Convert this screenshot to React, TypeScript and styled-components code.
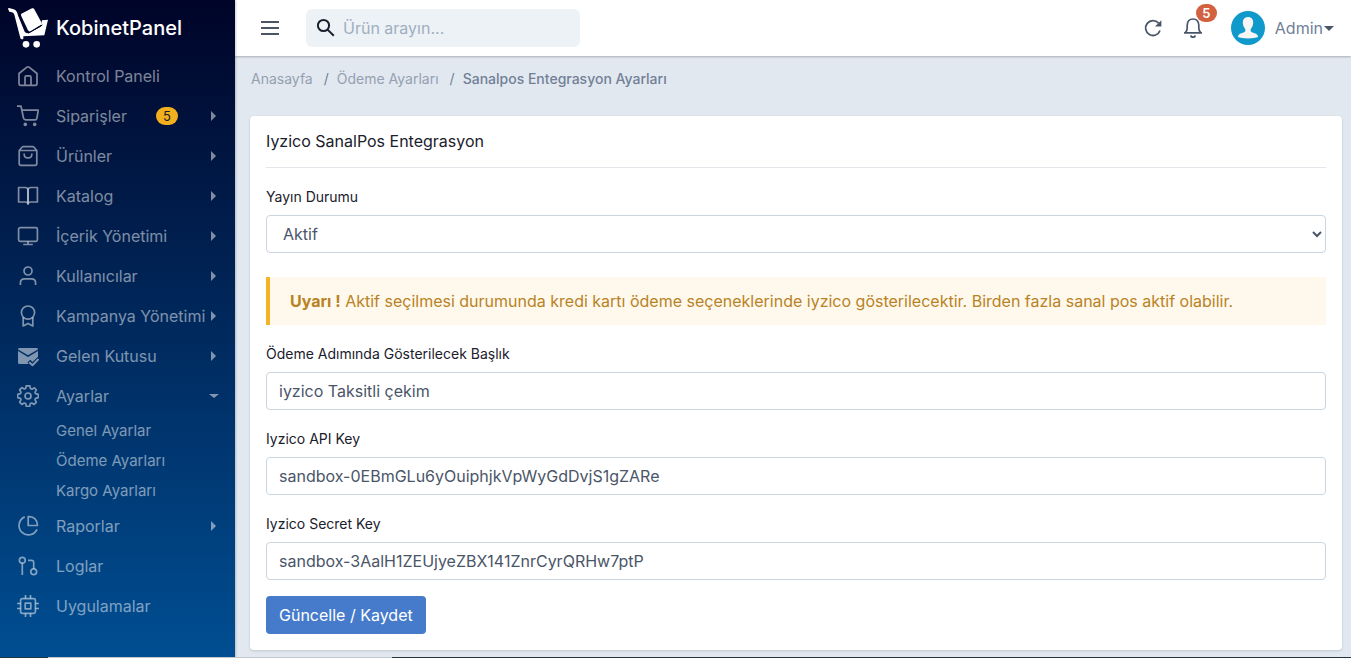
import React, { ReactNode } from "react";
import styled, { createGlobalStyle } from "styled-components";

const GlobalStyle = createGlobalStyle`
  *, *::before, *::after { box-sizing: border-box; }
  body {
    margin: 0;
    background: #e2e8f0;
    color: #1a202c;
    font-family: Inter, "Liberation Sans", sans-serif;
    font-size: 16px;
    line-height: 24px;
  }
  button, input, select { font: inherit; }
  a { color: inherit; text-decoration: none; }
`;

const Page = styled.div`
  display: flex;
  min-height: 100vh;
`;

const Sidebar = styled.aside`
  flex: 0 0 235px;
  background: linear-gradient(#000428, #004e92);
  box-shadow: 1px 0 2px rgba(0, 0, 0, 0.2);
  color: #fff;
  z-index: 1;
`;

const Brand = styled.a`
  display: flex;
  align-items: center;
  gap: 8px;
  height: 56px;
  padding: 0 8px;
  font-size: 20px;
  font-weight: 500;
`;

const NavList = styled.ul`
  list-style: none;
  margin: 0;
  padding: 0;
`;

const NavLink = styled.a`
  display: flex;
  align-items: center;
  height: 40px;
  padding: 0 16px 0 17px;
  color: rgba(255, 255, 255, 0.5);
`;

const NavIcon = styled.svg`
  flex: none;
  width: 22px;
  height: 22px;
  margin-right: 17px;
  fill: none;
  stroke: currentColor;
  stroke-width: 1.7;
  stroke-linejoin: round;
`;

const NavText = styled.span`
  flex: 1;
  white-space: nowrap;
`;

const CountBadge = styled.span`
  width: 22px;
  margin-right: 33px;
  border-radius: 9px;
  background: #f2b01e;
  color: #1a202c;
  font-size: 13px;
  line-height: 18px;
  text-align: center;
`;

const SideCaret = styled.span<{ $open?: boolean }>`
  border: solid transparent;
  ${(p) =>
    p.$open
      ? "border-width: 4px 5px 0; border-top-color: currentColor;"
      : "border-width: 5px 0 5px 5px; border-left-color: currentColor; margin-right: 3px;"}
`;

const SubLink = styled.a`
  display: block;
  padding-left: 56px;
  color: rgba(255, 255, 255, 0.5);
  font-size: 15px;
  line-height: 30px;
`;

const Content = styled.div`
  flex: 1;
  min-width: 0;
`;

const TopBar = styled.header`
  display: flex;
  align-items: center;
  height: 56px;
  padding: 0 17px 0 25px;
  background: #fff;
  box-shadow: 0 1px 2px rgba(0, 0, 0, 0.25);
`;

const IconButton = styled.button`
  position: relative;
  display: flex;
  padding: 0;
  border: 0;
  background: none;
  color: #4a5568;
`;

const SearchBox = styled.label`
  display: flex;
  align-items: center;
  gap: 5px;
  width: 274px;
  height: 38px;
  margin: 0 auto 0 26px;
  padding: 0 8px;
  border-radius: 6px;
  background: #edf2f7;
`;

const SearchInput = styled.input`
  flex: 1;
  min-width: 0;
  padding: 0;
  border: 0;
  outline: 0;
  background: none;
  color: #4a5568;
  &::placeholder { color: #a0aec0; }
`;

const TopActions = styled.div`
  display: flex;
  align-items: center;
  gap: 18px;
`;

const AlertCount = styled.span`
  position: absolute;
  top: -13px;
  left: 14px;
  width: 21px;
  border-radius: 9px;
  background: #d3603e;
  color: #fff;
  font-size: 13px;
  font-weight: 600;
  line-height: 18px;
  text-align: center;
`;

const AccountButton = styled.button`
  display: flex;
  align-items: center;
  padding: 0;
  margin-left: 9px;
  border: 0;
  background: none;
  color: #718096;
`;

const AccountName = styled.span`
  margin: 0 1px 0 10px;
`;

const AccountCaret = styled.span`
  border: solid transparent;
  border-width: 5px 5px 0;
  border-top-color: #4a5568;
`;

const Breadcrumb = styled.ol`
  display: flex;
  list-style: none;
  margin: 0;
  padding: 12px 16px;
  font-size: 14px;
  line-height: 22px;
`;

const Crumb = styled.li<{ $current?: boolean }>`
  color: ${(p) => (p.$current ? "#718096" : "#94a0b2")};
  font-weight: ${(p) => (p.$current ? 500 : 400)};
  li + &::before {
    content: "/";
    padding: 0 8px 0 11px;
    color: #718096;
    font-weight: 400;
  }
`;

const Main = styled.main`
  padding: 14px 9px 8px 15px;
`;

const Card = styled.form`
  padding: 16px;
  border-radius: 4px;
  background: #fff;
  box-shadow: 0 1px 3px rgba(0, 0, 0, 0.14);
`;

const CardTitle = styled.h1`
  margin: 0 0 16px;
  padding-bottom: 16px;
  border-bottom: 1px solid #e2e5e9;
  font-size: 16px;
  font-weight: 400;
  line-height: 19px;
`;

const Field = styled.div`
  margin-bottom: 16px;
`;

const FieldLabel = styled.label`
  display: block;
  margin-bottom: 5px;
  font-size: 14px;
  line-height: 26px;
`;

const TextInput = styled.input`
  display: block;
  width: 100%;
  height: 38px;
  padding: 0 12px;
  border: 1px solid #cbd5e0;
  border-radius: 4px;
  background: #fff;
  color: #4a5568;
`;

const Select = styled.select`
  display: block;
  width: 100%;
  height: 38px;
  padding: 0 12px;
  border: 1px solid #cbd5e0;
  border-radius: 4px;
  background: #fff;
  color: #4a5568;
`;

const Warning = styled.p`
  margin: 24px 0 16px;
  padding: 12px 20px;
  border-left: 4px solid #f6b32a;
  background: #fef9ec;
  color: #b98225;
`;

const SubmitButton = styled.button`
  display: block;
  height: 38px;
  padding: 0 13px;
  border: 0;
  border-radius: 4px;
  background: #467bcb;
  color: #fff;
`;

const BottomEdge = styled.div`
  position: fixed;
  inset: auto 0 0 0;
  z-index: 2;
  height: 1px;
  background: linear-gradient(90deg, #1d3444 48px, #c3c7cb 48px 392px, #26363f 392px);
`;

interface NavItem {
  label: string;
  icon: ReactNode;
  badge?: string;
  expandable?: boolean;
  children?: string[];
}

const navItems: NavItem[] = [
  {
    label: "Kontrol Paneli",
    icon: (
      <path d="M2 8.5 9.6 2.3Q11 1.2 12.4 2.3L20 8.5V18.5Q20 20.3 18.2 20.3H3.8Q2 20.3 2 18.5ZM8 20V12.3Q8 10.8 9.5 10.8H12.5Q14 10.8 14 12.3V20" />
    ),
  },
  {
    label: "Siparişler",
    badge: "5",
    expandable: true,
    icon: (
      <>
        <path d="M0 1.2H4L6.5 13Q7 14.8 8.8 14.8H18Q19.5 14.8 19.9 13.2L21.3 5.2H5" />
        <circle cx="8.3" cy="19.4" r="1.8" fill="currentColor" stroke="none" />
        <circle cx="17.7" cy="19.4" r="1.8" fill="currentColor" stroke="none" />
      </>
    ),
  },
  {
    label: "Ürünler",
    expandable: true,
    icon: (
      <path d="M2.2 5.5 5 2.2Q5.5 1.6 6.3 1.6H15.7Q16.5 1.6 17 2.2L19.8 5.5V18.5Q19.8 20.3 18 20.3H4Q2.2 20.3 2.2 18.5ZM2.2 5.5H19.8M7.2 8.5V9.7Q7.4 12.8 11 12.8T14.8 9.7V8.5" />
    ),
  },
  {
    label: "Katalog",
    expandable: true,
    icon: (
      <>
        <path d="M11 19.5V5Q11 2.5 8 2.5H1.6V17H8.5Q11 17 11 19.5" />
        <path d="M11 19.5V5Q11 2.5 14 2.5H20.4V17H13.5Q11 17 11 19.5" />
      </>
    ),
  },
  {
    label: "İçerik Yönetimi",
    expandable: true,
    icon: (
      <>
        <rect x="1.6" y="2.6" width="18.8" height="13.8" rx="1.6" />
        <path d="M11 16.5V19.5M6.2 19.5H15.8" />
      </>
    ),
  },
  {
    label: "Kullanıcılar",
    expandable: true,
    icon: (
      <>
        <circle cx="11" cy="6" r="4" />
        <path d="M3.4 20V18Q3.4 13.8 7.6 13.8H14.4Q18.6 13.8 18.6 18V20" />
      </>
    ),
  },
  {
    label: "Kampanya Yönetimi",
    expandable: true,
    icon: (
      <>
        <circle cx="11" cy="7.6" r="6.6" />
        <path d="M6.2 12.2V21L11 18.4L15.8 21V12.2" />
      </>
    ),
  },
  {
    label: "Gelen Kutusu",
    expandable: true,
    icon: (
      <>
        <path
          fill="currentColor"
          stroke="none"
          d="M2.6 3H19.4Q21 3 21 4.4L11 10.3 1 4.4Q1 3 2.6 3ZM1 6 11 12 21 6V11.7L15.5 17 13.3 14.7 10.4 17.6 11.8 19H2.6Q1 19 1 17.4Z"
        />
        <path d="M12.2 17.2 15.5 20.2 21.5 14" strokeWidth="2" />
      </>
    ),
  },
  {
    label: "Ayarlar",
    expandable: true,
    children: ["Genel Ayarlar", "Ödeme Ayarları", "Kargo Ayarları"],
    icon: (
      <>
        <path d="M9.2.8H12.8L13.4 3.5 15 4.2 17.4 2.8 19.4 5 18 7.1 18.6 8.7 21.3 9.3V12.7L18.6 13.3 18 14.9 19.4 17.2 17.2 19.4 14.9 18 13.3 18.6 12.7 21.3H9.3L8.7 18.6 7.1 18 4.8 19.4 2.6 17.2 4 14.9 3.4 13.3.7 12.7V9.3L3.4 8.7 4 7.1 2.6 4.8 4.8 2.6 7.1 4 8.7 3.4Z" />
        <circle cx="11" cy="11" r="3" />
      </>
    ),
  },
  {
    label: "Raporlar",
    expandable: true,
    icon: (
      <path d="M7.7 1.9A9.4 9.4 0 1 0 20 14.4M11.2 1.7V10.5H20.4V9.6Q19.6 2.2 12.4 1.7Z" />
    ),
  },
  {
    label: "Loglar",
    icon: (
      <>
        <circle cx="5.3" cy="5.3" r="2.9" />
        <circle cx="16.7" cy="16.7" r="2.9" />
        <path d="M5.3 8.2V20M11 5.3H14.4Q16.7 5.3 16.7 7.6V13.8" />
      </>
    ),
  },
  {
    label: "Uygulamalar",
    icon: (
      <>
        <rect x="3.6" y="3.6" width="14.8" height="14.8" rx="1.6" />
        <rect x="8.2" y="8.2" width="5.6" height="5.6" />
        <path d="M8.5 0V3.6M13.5 0V3.6M8.5 18.4V22M13.5 18.4V22M0 8.5H3.6M0 13.5H3.6M18.4 8.5H22M18.4 13.5H22" />
      </>
    ),
  },
];

function Logo() {
  return (
    <svg width="40" height="40" viewBox="0 0 120 120" fill="#fff" aria-hidden="true">
      <path d="M0 2Q0 0 3 0L17 4Q24 6 27 13L31 25 50 71 62 76 98 56 102 37 120 35 109 82 46 85V92Q45 94 42 94 38 94 37 90L19 20Q17 14 12 13L4 11Z" />
      <path d="M40 17 72 1Q77-1 79 4L100 43Q102 48 98 51L69 69Q63 72 60 67L40 25Q38 20 40 17Z" />
      <path d="M52 72 62 75 103 51" fill="none" stroke="#000428" strokeWidth="3" />
      <circle cx="54" cy="109" r="10" />
      <circle cx="86" cy="109" r="10" />
    </svg>
  );
}

function SideNav() {
  return (
    <nav>
      <NavList>
        {navItems.map((item) => (
          <li key={item.label}>
            <NavLink href="#">
              <NavIcon viewBox="0 0 22 22" aria-hidden="true">{item.icon}</NavIcon>
              <NavText>{item.label}</NavText>
              {item.badge && <CountBadge>{item.badge}</CountBadge>}
              {item.expandable && <SideCaret $open={!!item.children} />}
            </NavLink>
            {item.children && (
              <NavList>
                {item.children.map((child) => (
                  <li key={child}>
                    <SubLink href="#">{child}</SubLink>
                  </li>
                ))}
              </NavList>
            )}
          </li>
        ))}
      </NavList>
    </nav>
  );
}

function Header() {
  return (
    <TopBar>
      <IconButton type="button" aria-label="Menü">
        <svg width="20" height="20" viewBox="0 0 20 20" stroke="currentColor" strokeWidth="2">
          <path d="M1 4H19M1 10H19M1 16H19" />
        </svg>
      </IconButton>
      <SearchBox>
        <svg width="24" height="24" viewBox="0 0 24 24" fill="none" stroke="#1a202c" strokeWidth="2">
          <circle cx="9.5" cy="9.5" r="5.6" />
          <path d="M13.6 13.6 19.8 19.8" />
        </svg>
        <SearchInput type="text" placeholder="Ürün arayın..." aria-label="Ürün arayın" />
      </SearchBox>
      <TopActions>
        <IconButton type="button" aria-label="Yenile">
          <svg width="22" height="22" viewBox="0 0 22 22" fill="none" stroke="currentColor" strokeWidth="1.8">
            <path d="M18 13.5A7.4 7.4 0 1 1 16.6 6.2" />
            <path d="M19.4 3.2V9.6H13Z" fill="currentColor" stroke="none" />
          </svg>
        </IconButton>
        <IconButton type="button" aria-label="Bildirimler">
          <svg width="22" height="22" viewBox="0 0 22 22" fill="none" stroke="currentColor" strokeWidth="1.7">
            <path d="M2 15.9H20M3.4 15.6Q5.2 13.6 5.2 11V8Q5.6 2 11 2T16.8 8V11Q16.8 13.6 18.6 15.6" />
            <path d="M8.8 18.4Q9 20.2 11 20.2T13.2 18.4" />
          </svg>
          <AlertCount>5</AlertCount>
        </IconButton>
        <AccountButton type="button">
          <svg width="34" height="34" viewBox="0 0 34 34" aria-hidden="true">
            <circle cx="17" cy="17" r="17" fill="#109acb" />
            <path
              fill="#f7f5f5"
              d="M17 6C20.6 6 22.4 8.4 22.2 12Q22.1 15.8 19.7 18.2V20.2Q20.2 21.4 23.5 22.3 27 23.2 27 26Q24 27.4 17 27.4T7 26Q7 23.2 10.5 22.3 13.8 21.4 14.3 20.2V18.2Q11.9 15.8 11.8 12 11.6 8.4 14 6.8 15.2 6 17 6Z"
            />
          </svg>
          <AccountName>Admin</AccountName>
          <AccountCaret />
        </AccountButton>
      </TopActions>
    </TopBar>
  );
}

export default function App() {
  return (
    <>
      <GlobalStyle />
      <Page>
        <Sidebar>
          <Brand href="#">
            <Logo />
            KobinetPanel
          </Brand>
          <SideNav />
        </Sidebar>
        <Content>
          <Header />
          <Breadcrumb>
            <Crumb><a href="#">Anasayfa</a></Crumb>
            <Crumb><a href="#">Ödeme Ayarları</a></Crumb>
            <Crumb $current>Sanalpos Entegrasyon Ayarları</Crumb>
          </Breadcrumb>
          <Main>
            <Card>
              <CardTitle>Iyzico SanalPos Entegrasyon</CardTitle>
              <Field>
                <FieldLabel htmlFor="status">Yayın Durumu</FieldLabel>
                <Select id="status" defaultValue="1">
                  <option value="1">Aktif</option>
                  <option value="0">Pasif</option>
                </Select>
              </Field>
              <Warning>
                <strong>Uyarı !</strong> Aktif seçilmesi durumunda kredi kartı ödeme seçeneklerinde
                iyzico gösterilecektir. Birden fazla sanal pos aktif olabilir.
              </Warning>
              <Field>
                <FieldLabel htmlFor="title">Ödeme Adımında Gösterilecek Başlık</FieldLabel>
                <TextInput id="title" type="text" defaultValue="iyzico Taksitli çekim" />
              </Field>
              <Field>
                <FieldLabel htmlFor="api">Iyzico API Key</FieldLabel>
                <TextInput id="api" type="text" defaultValue="sandbox-0EBmGLu6yOuiphjkVpWyGdDvjS1gZARe" />
              </Field>
              <Field>
                <FieldLabel htmlFor="secret">Iyzico Secret Key</FieldLabel>
                <TextInput id="secret" type="text" defaultValue="sandbox-3AalH1ZEUjyeZBX141ZnrCyrQRHw7ptP" />
              </Field>
              <SubmitButton type="submit">Güncelle / Kaydet</SubmitButton>
            </Card>
          </Main>
        </Content>
      </Page>
      <BottomEdge />
    </>
  );
}
